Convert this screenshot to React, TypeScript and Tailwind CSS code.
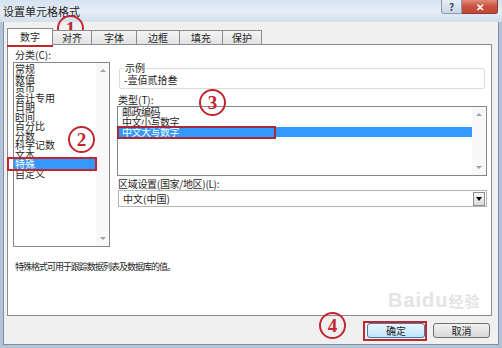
import React from 'react';

const cats = ['常规', '数值', '货币', '会计专用', '日期', '时间', '百分比', '分数', '科学记数', '文本', '特殊', '自定义'];
const types = ['邮政编码', '中文小写数字', '中文大写数字'];
const tabs = ['对齐', '字体', '边框', '填充', '保护'];
const tabW = ['w-[40px]', 'w-[46px]', 'w-[44px]', 'w-[44px]', 'w-[40px]'];

const Mark = ({ n, pos }: { n: string; pos: string }) => (
    <div
        className={`absolute w-[27px] h-[27px] rounded-full border-2 border-[#c1272d] text-[#c1272d] flex items-center justify-center font-['Liberation_Serif',serif] text-[19px] font-bold leading-none ${pos}`}
    >
        {n}
    </div>
);

const Scroll = ({ w }: { w: string }) => (
    <div className={`${w} h-full bg-[#f8f8f8] flex flex-col items-center justify-between py-[6px]`}>
        <div className="w-0 h-0 border-l-[3px] border-r-[3px] border-b-[3px] border-l-transparent border-r-transparent border-b-[#a0a0a0]" />
        <div className="w-0 h-0 border-l-[3px] border-r-[3px] border-t-[3px] border-l-transparent border-r-transparent border-t-[#a0a0a0]" />
    </div>
);

export default function App() {
    return (
        <div className="w-[502px] h-[348px] relative overflow-hidden bg-[#b4c4d8] flex flex-col font-['Noto_Sans_CJK_SC',sans-serif] text-[#1e1e1e]">
            {/* title bar */}
            <div className="h-[22px] flex items-start bg-linear-to-b from-[#d5e2f1] via-[#e6edf6] to-[#d3dfec]">
                <span className="pl-[3px] pt-[5px] text-[11px] leading-[12px]">设置单元格格式</span>
                <div className="ml-auto mr-[4px] flex">
                    <div className="w-[21px] h-[14px] border border-[#8a9bb0] border-t-0 rounded-bl-[3px] bg-linear-to-b from-[#e8eef6] to-[#c9d6e6] flex items-center justify-center text-[10px] leading-none font-bold text-[#3b4a60]">
                        ?
                    </div>
                    <div className="w-[36px] h-[14px] border border-[#8a3a30] border-t-0 border-l-0 rounded-br-[3px] bg-linear-to-b from-[#e08a7a] via-[#c9503e] to-[#c24a38] flex items-center justify-center text-[10px] leading-none font-bold text-white">
                        ✕
                    </div>
                </div>
            </div>

            {/* window body */}
            <div className="flex-1 mx-[3px] mb-[3px] border border-t-0 border-[#7d8ea3] bg-[#f0f0f0] pl-[3px] pr-[6px] pt-[6px] flex flex-col">
                {/* tabs */}
                <div className="h-[16px] flex items-end relative z-10">
                    <div className="w-[46px] h-[17px] -mb-px bg-white border border-b-0 border-[#898c95] flex items-center justify-center text-[10px] leading-none">
                        数字
                    </div>
                    {tabs.map((t, i) => (
                        <div
                            key={t}
                            className={`${tabW[i]} h-[14px] -ml-px border border-b-0 border-[#898c95] bg-linear-to-b from-[#f4f4f4] to-[#e2e2e2] flex items-center justify-center text-[10px] leading-none`}
                        >
                            {t}
                        </div>
                    ))}
                </div>

                {/* panel */}
                <div className="w-[485px] h-[272px] bg-white border border-[#898c95] flex flex-col">
                    <div className="h-[202px] flex items-start">
                        {/* category */}
                        <div className="ml-[5px] pt-[4px] flex flex-col">
                            <span className="pl-[2px] text-[10px] leading-[11px]">分类(C):</span>
                            <div className="mt-[2px] w-[97px] h-[185px] border border-[#828790] flex">
                                <div className="flex-1 pt-[1px] flex flex-col">
                                    {cats.map((c) => (
                                        <div
                                            key={c}
                                            className={`h-[9.5px] pl-[1px] text-[10px] leading-[9.5px] whitespace-nowrap ${c === '特殊' ? 'bg-[#3399ff] text-white' : ''}`}
                                        >
                                            {c}
                                        </div>
                                    ))}
                                </div>
                                <Scroll w="w-[13px]" />
                            </div>
                        </div>

                        {/* right side */}
                        <div className="ml-[7px] w-[370px] pt-[18px] flex flex-col">
                            <fieldset className="h-[26px] mx-[2px] px-[4px] border border-[#dcdcdc] rounded-[2px]">
                                <legend className="px-[1px] text-[10px] leading-[10px]">示例</legend>
                                <div className="pt-[1px] text-[10px] leading-[12px]">-壹佰贰拾叁</div>
                            </fieldset>
                            <span className="mt-[6px] pl-[1px] text-[10px] leading-[10px]">类型(T):</span>
                            <div className="mt-[1px] h-[70px] border border-[#828790] flex">
                                <div className="flex-1 flex flex-col">
                                    {types.map((t) => (
                                        <div
                                            key={t}
                                            className={`h-[10px] pl-[4px] text-[10px] leading-[10px] tracking-[-0.5px] ${t === '中文大写数字' ? 'bg-[#3399ff] text-white' : ''}`}
                                        >
                                            {t}
                                        </div>
                                    ))}
                                </div>
                                <Scroll w="w-[14px]" />
                            </div>
                            <span className="mt-[2px] pl-[1px] text-[10px] leading-[11px] tracking-[-0.3px]">区域设置(国家/地区)(L):</span>
                            <div className="mt-[1px] ml-[1px] h-[17px] border border-[#b5b5b5] flex items-center pl-[4px] pr-[1px]">
                                <span className="text-[10px] leading-none">中文(中国)</span>
                                <div className="ml-auto w-[12px] h-[14px] border border-[#8f8f8f] bg-linear-to-b from-[#f6f6f6] to-[#dcdcdc] flex items-center justify-center">
                                    <div className="w-0 h-0 border-l-[3px] border-r-[3px] border-t-[4px] border-l-transparent border-r-transparent border-t-black" />
                                </div>
                            </div>
                        </div>
                    </div>
                    <p className="mt-[15px] pl-[7px] text-[9px] leading-[10px] tracking-[-1px]">特殊格式可用于跟踪数据列表及数据库的值。</p>
                </div>

                {/* buttons */}
                <div className="pt-[7px] flex justify-end gap-[8px] mr-[2px]">
                    <button className="w-[58px] h-[15px] border border-[#3c7fb1] rounded-[3px] bg-linear-to-b from-[#eaf6fd] to-[#bee6fd] text-[10px] leading-none">
                        确定
                    </button>
                    <button className="w-[57px] h-[15px] border border-[#707070] rounded-[3px] bg-linear-to-b from-[#f2f2f2] to-[#d8d8d8] text-[10px] leading-none">
                        取消
                    </button>
                </div>
            </div>

            {/* watermark */}
            <div className="absolute left-[388px] top-[290px] text-[20px] font-bold leading-none text-[#e4e4e4] font-['Liberation_Sans',sans-serif] tracking-[1px]">
                Baidu<span className="text-[15px] font-['Noto_Sans_CJK_SC',sans-serif]">经验</span>
            </div>

            {/* red highlight boxes */}
            <div className="absolute left-[7px] top-[28px] w-[46px] h-[19px] border-2 border-[#c1272d]" />
            <div className="absolute left-[7px] top-[157px] w-[90px] h-[14px] border-2 border-[#c1272d]" />
            <div className="absolute left-[117px] top-[126px] w-[159px] h-[13px] border-2 border-[#a8283a]" />
            <div className="absolute left-[363px] top-[321px] w-[64px] h-[20px] border-2 border-[#c1272d]" />

            <Mark n="1" pos="left-[57px] top-[15px]" />
            <Mark n="2" pos="left-[68px] top-[126px]" />
            <Mark n="3" pos="left-[199px] top-[89px]" />
            <Mark n="4" pos="left-[319px] top-[312px]" />
        </div>
    );
}
